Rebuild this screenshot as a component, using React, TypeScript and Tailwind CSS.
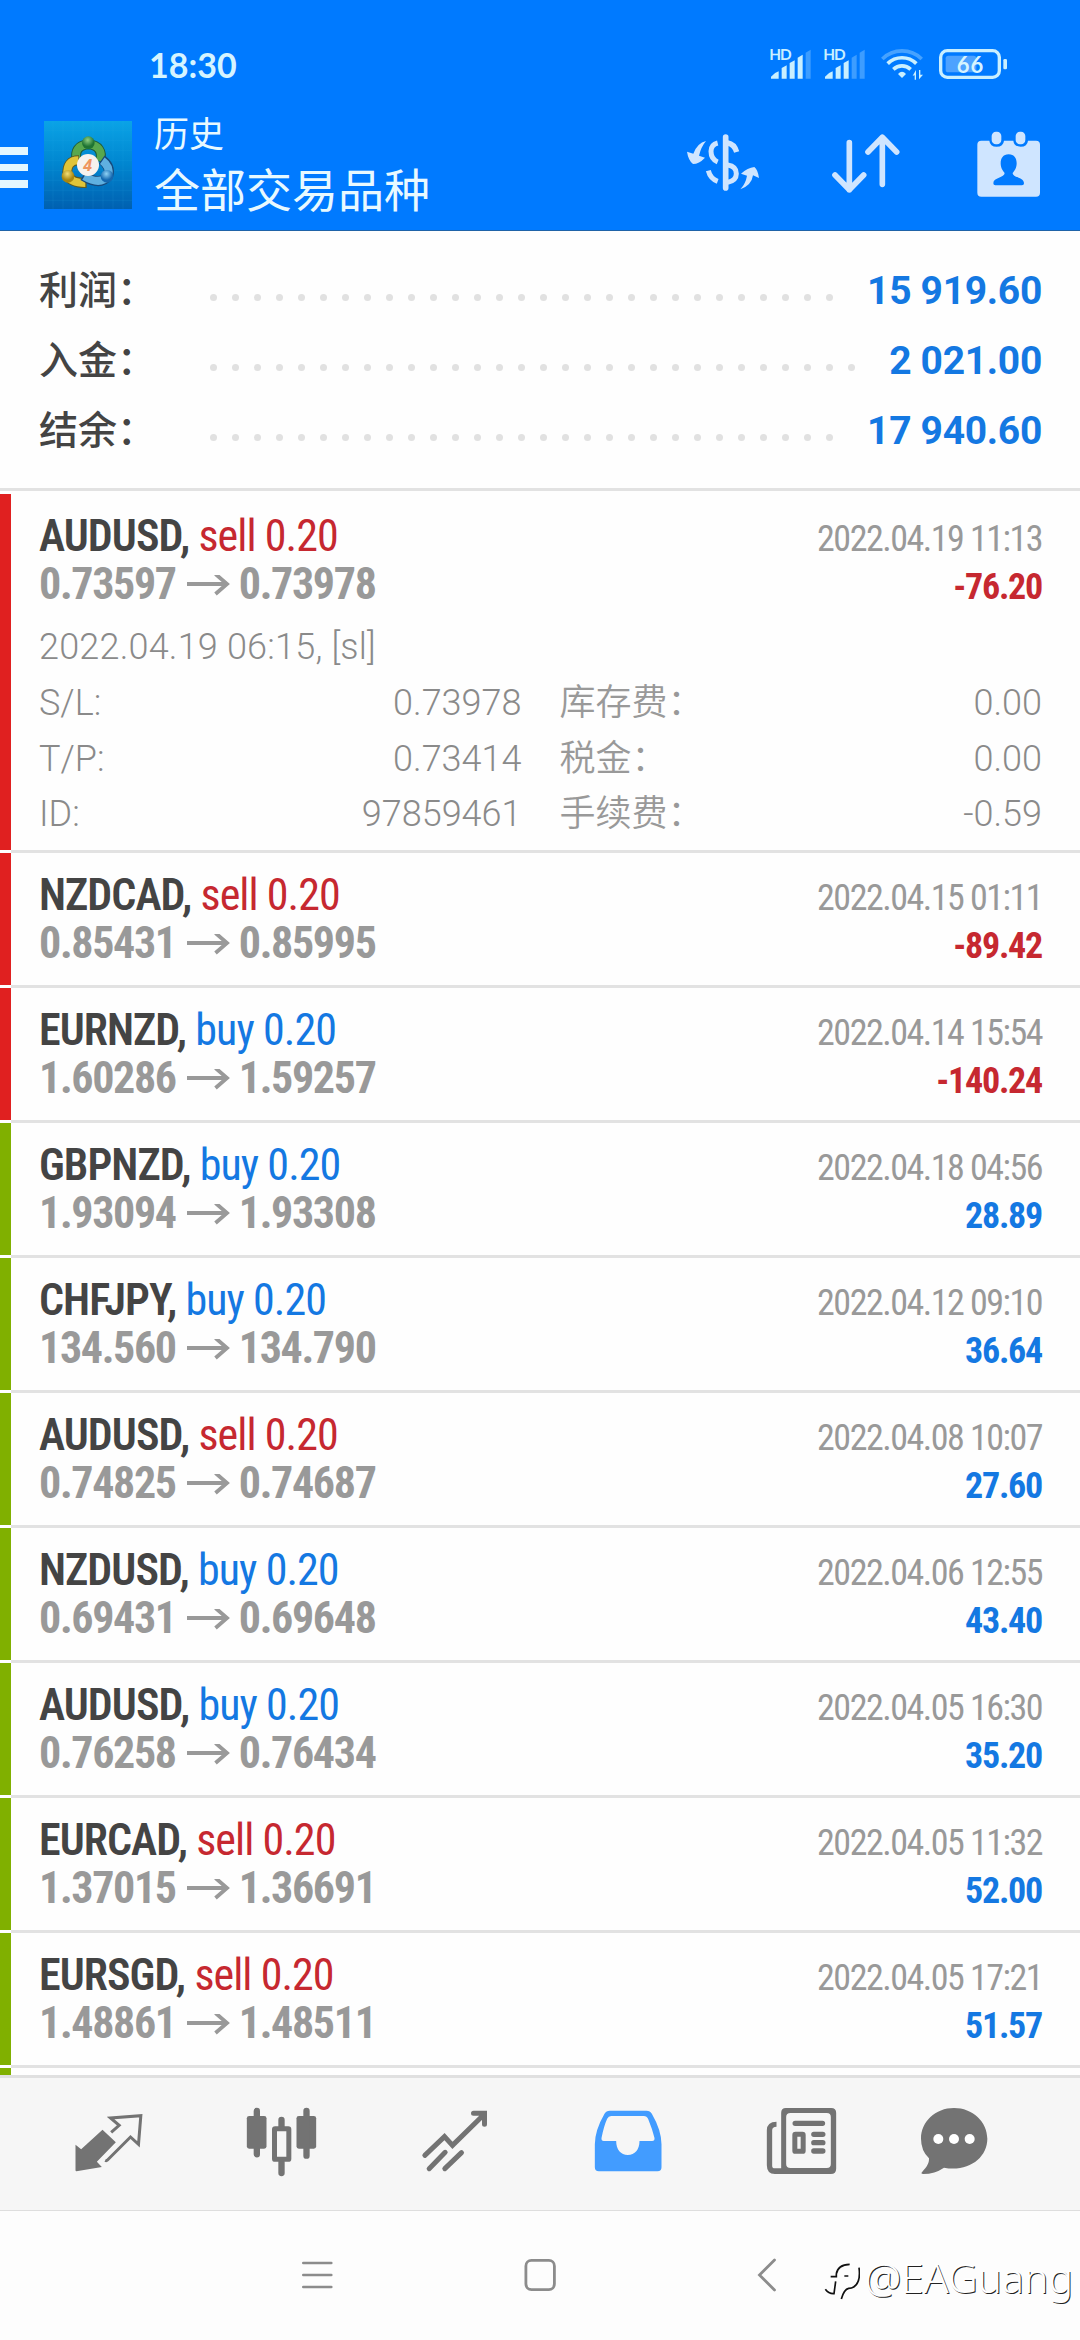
import type { ReactNode } from "react"

type Deal = {
    symbol: string
    side: "buy" | "sell"
    volume: string
    open: string
    close: string
    time: string
    profit: string
    details?: {
        comment: string
        rows: string[][]
    }
}

const summary = [
    { label: "利润：", value: "15 919.60" },
    { label: "入金：", value: "2 021.00" },
    { label: "结余：", value: "17 940.60" },
]

const deals: Deal[] = [
    {
        symbol: "AUDUSD",
        side: "sell",
        volume: "0.20",
        open: "0.73597",
        close: "0.73978",
        time: "2022.04.19 11:13",
        profit: "-76.20",
        details: {
            comment: "2022.04.19 06:15, [sl]",
            rows: [
                ["S/L:", "0.73978", "库存费：", "0.00"],
                ["T/P:", "0.73414", "税金：", "0.00"],
                ["ID:", "97859461", "手续费：", "-0.59"],
            ],
        },
    },
    { symbol: "NZDCAD", side: "sell", volume: "0.20", open: "0.85431", close: "0.85995", time: "2022.04.15 01:11", profit: "-89.42" },
    { symbol: "EURNZD", side: "buy", volume: "0.20", open: "1.60286", close: "1.59257", time: "2022.04.14 15:54", profit: "-140.24" },
    { symbol: "GBPNZD", side: "buy", volume: "0.20", open: "1.93094", close: "1.93308", time: "2022.04.18 04:56", profit: "28.89" },
    { symbol: "CHFJPY", side: "buy", volume: "0.20", open: "134.560", close: "134.790", time: "2022.04.12 09:10", profit: "36.64" },
    { symbol: "AUDUSD", side: "sell", volume: "0.20", open: "0.74825", close: "0.74687", time: "2022.04.08 10:07", profit: "27.60" },
    { symbol: "NZDUSD", side: "buy", volume: "0.20", open: "0.69431", close: "0.69648", time: "2022.04.06 12:55", profit: "43.40" },
    { symbol: "AUDUSD", side: "buy", volume: "0.20", open: "0.76258", close: "0.76434", time: "2022.04.05 16:30", profit: "35.20" },
    { symbol: "EURCAD", side: "sell", volume: "0.20", open: "1.37015", close: "1.36691", time: "2022.04.05 11:32", profit: "52.00" },
    { symbol: "EURSGD", side: "sell", volume: "0.20", open: "1.48861", close: "1.48511", time: "2022.04.05 17:21", profit: "51.57" },
]

function Signal({ level }: { level: number }) {
    const bars = [
        "M331 143v-6q8-11 23-16v22z",
        "M363 143v-32l15-8v40z",
        "M387 143v-47l15-8v55z",
        "M411 143v-63l15-9v72z",
        "M435 143v-78l15-9v87z",
    ]
    return (
        <svg className="-mt-[9px] h-[42px] w-[44px]" viewBox="322 21 132 126">
            <text x="326" y="87" fontSize="46" fontWeight="700" fill="#c9efff" fontFamily="Lato, sans-serif" textLength="67">
                HD
            </text>
            {bars.map((d, i) => (
                <path key={d} d={d} fill="#c9efff" opacity={i < level ? 1 : 0.3} />
            ))}
        </svg>
    )
}

function Wifi() {
    return (
        <svg className="ml-[14px] h-[35px] w-[45px]" viewBox="657 54 135 105" fill="none" stroke="#c9efff" strokeWidth="11">
            <path d="M664 93a84 84 0 0 1 118 0" opacity="0.35" />
            <path d="M680 107a61 61 0 0 1 86 0" />
            <path d="M697 124a38 38 0 0 1 52 0" />
            <path d="M711 138q12-13 24 0l-12 12z" fill="#c9efff" stroke="none" />
            <path d="M755 143l10-17v29h-4v-13zM774 126h4v14h8l-12 14z" fill="#c9efff" stroke="none" />
        </svg>
    )
}

function Battery() {
    return (
        <svg className="ml-[13px] h-[32px] w-[70px]" viewBox="831 54 210 96">
            <rect x="854" y="77" width="92" height="50" rx="8" fill="#fff" opacity="0.3" />
            <rect x="839" y="62" width="176" height="80" rx="20" fill="none" stroke="#c9efff" strokeWidth="10" />
            <rect x="1027" y="87" width="11" height="31" rx="4" fill="#c9efff" />
            <text x="887" y="128" fontSize="66" fontWeight="700" fill="#d6f4ff" fontFamily="Lato, sans-serif" textLength="80">
                66
            </text>
        </svg>
    )
}

function AppLogo() {
    return (
        <svg className="h-[88px] w-[88px]" viewBox="133 272 264 264">
            <defs>
                <linearGradient id="sky" x1="0" y1="0" x2="0" y2="1">
                    <stop offset="0" stopColor="#0aa3e6" />
                    <stop offset="0.5" stopColor="#0085cf" />
                    <stop offset="1" stopColor="#0060b0" />
                </linearGradient>
                <radialGradient id="green" cx="0.45" cy="0.3">
                    <stop offset="0" stopColor="#8fcf83" />
                    <stop offset="1" stopColor="#1f7433" />
                </radialGradient>
                <radialGradient id="gold" cx="0.45" cy="0.3">
                    <stop offset="0" stopColor="#f1df78" />
                    <stop offset="1" stopColor="#a8860f" />
                </radialGradient>
                <radialGradient id="azure" cx="0.45" cy="0.3">
                    <stop offset="0" stopColor="#8fd2f5" />
                    <stop offset="1" stopColor="#1468b0" />
                </radialGradient>
            </defs>
            <rect x="133" y="272" width="264" height="264" fill="url(#sky)" />
            <path
                d="M160 272v264M190 272v264M220 272v264M250 272v264M280 272v264M310 272v264M340 272v264M370 272v264M133 300h264M133 330h264M133 360h264M133 390h264M133 420h264M133 450h264M133 480h264M133 510h264"
                stroke="#36b5ef"
                strokeOpacity="0.22"
                strokeWidth="1.5"
            />
            <g fill="none">
                <path d="M231 392q-10-46 35-50q46 4 36 52" stroke="#1f5c3a" strokeWidth="30" />
                <path d="M231 390q-10-44 35-48q46 4 36 50" stroke="#58a84e" strokeWidth="24" />
                <path d="M238 390q-38 0-35 44q10 24 58 24" stroke="#5f5a20" strokeWidth="30" />
                <path d="M236 390q-36 0-33 44q10 24 54 24" stroke="#e0c438" strokeWidth="24" />
                <path d="M306 388q28 20 20 48q-24 32-76 0" stroke="#174a7c" strokeWidth="30" />
                <path d="M308 391q24 17 18 45q-24 30-72 2" stroke="#5fb0e0" strokeWidth="24" />
            </g>
            <circle cx="266" cy="337" r="19" fill="url(#green)" />
            <circle cx="205" cy="438" r="19" fill="url(#gold)" />
            <circle cx="322" cy="438" r="19" fill="url(#azure)" />
            <circle cx="265" cy="404" r="33" fill="#f6f2ee" />
            <text x="264" y="421" textAnchor="middle" fontSize="48" fontWeight="700" fontStyle="italic" fill="#ee9560" fontFamily="Open Sans, sans-serif">
                4
            </text>
        </svg>
    )
}

function StatusBar() {
    return (
        <div className="flex h-[86px] items-end justify-between pr-[72px] pl-[149px]">
            <span className="font-[Lato] text-[34px] leading-[42px] font-bold text-[#d6f4ff]">18:30</span>
            <div className="mb-[5px] flex h-[35px] items-center">
                <Signal level={4} />
                <span className="w-[10px]" />
                <Signal level={3} />
                <Wifi />
                <Battery />
            </div>
        </div>
    )
}

function Header() {
    return (
        <header className="h-[231px] border-b border-[#1f63a8] bg-[#007aff]">
            <StatusBar />
            <div className="flex h-[144px]">
                <div className="mt-[61px] flex w-[28px] flex-col gap-[9px]">
                    <span className="h-[7.5px] bg-[#e3f7ff]" />
                    <span className="h-[7.5px] bg-[#e3f7ff]" />
                    <span className="h-[7.5px] bg-[#e3f7ff]" />
                </div>
                <div className="mt-[35px] ml-[16px]">
                    <AppLogo />
                </div>
                <div className="mt-[28px] ml-[22px] flex flex-1 flex-col text-[#e8f9ff]">
                    <span className="text-[35px] leading-[44px]">历史</span>
                    <span className="text-[46px] leading-[66px]">全部交易品种</span>
                </div>
                <div className="mt-[45px] mr-[38px] flex text-[#cfe5ff]">
                    {/* currency */}
                    <svg className="h-[66px] w-[76px]" viewBox="72 306 228 198" fill="none" stroke="currentColor" strokeWidth="14">
                        <path d="M194 324v153" strokeWidth="17" strokeLinecap="round" />
                        <path d="M170 342q-20 5-20 25q0 24 20 32" strokeWidth="15" />
                        <path d="M142 425q6 24 28 32" strokeWidth="15" />
                        <path d="M200 342q20 3 27 27" strokeWidth="16" />
                        <path d="M200 408q26 4 26 26q0 20-26 26" strokeWidth="15" />
                        <path d="M135 336q-26 6-38 38l-19-6q4 26 18 37q18 0 36-19l-18-6q6-26 21-44z" fill="currentColor" stroke="none" />
                        <path d="M238 481q34-12 38-42l18 8q-3-24-14-33q-20 2-40 20l18 6q-4 24-20 41z" fill="currentColor" stroke="none" />
                    </svg>
                    {/* sort */}
                    <svg className="ml-[70px] h-[66px] w-[70px]" viewBox="511 306 210 198" fill="none" stroke="currentColor" strokeWidth="17" strokeLinecap="round" strokeLinejoin="round">
                        <path d="M566 341v141M523 438l43 44l43-44M665 466v-141M622 369l43-44l43 44" />
                    </svg>
                    {/* period */}
                    <svg className="ml-[75px] h-[66px] w-[66px]" viewBox="946 303 198 198" fill="currentColor">
                        <path
                            fillRule="evenodd"
                            d="M962 332h24q2 18 22 18t22-18h28q2 18 22 18t22-18h24q12 0 12 12v144q0 12-12 12h-164q-12 0-12-12v-144q0-12 12-12zM1044 373c-17 0-24 13-24 27c0 15 7 23 12 29c0 14-34 13-34 31q0 6 6 6h80q6 0 6-6c0-18-34-17-34-31c5-6 12-14 12-29c0-14-7-27-24-27z"
                        />
                        <rect x="993" y="305" width="29" height="38" rx="13" />
                        <rect x="1065" y="305" width="29" height="38" rx="13" />
                    </svg>
                </div>
            </div>
        </header>
    )
}

function Summary() {
    return (
        <section className="h-[260px] border-b-3 border-[#e2e2e2] pt-[25px]">
            {summary.map((item) => (
                <div key={item.label} className="flex h-[70px] items-center pr-[38px] pl-[39px] text-[39px] leading-[70px] font-medium">
                    <span className="w-[171px] text-[#444444]">{item.label}</span>
                    <span className="mt-[12px] flex h-[7px] flex-1 flex-wrap gap-x-[15px] gap-y-4 overflow-hidden">
                        {Array.from({ length: 36 }, (_, i) => (
                            <i key={i} className="size-[7px] rounded-full bg-[#e1e1e1]" />
                        ))}
                    </span>
                    <span className="pl-[16px] font-bold tracking-[-0.3px] text-[#1478e2]">{item.value}</span>
                </div>
            ))}
        </section>
    )
}

function DealRow({ deal }: { deal: Deal }) {
    const loss = deal.profit.startsWith("-")
    return (
        <li className="flex">
            <span className={loss ? "mb-[3px] w-[11px] bg-[#e02020]" : "mb-[3px] w-[11px] bg-[#80b000]"} />
            <div className="flex-1 border-b-3 border-[#e2e2e2] pt-[18px] pr-[38px] pl-[28px]">
                <div className="flex h-[48px] items-baseline justify-between font-['Roboto_Condensed'] leading-[48px]">
                    <span className="text-[44px] tracking-[-0.95px]">
                        <b className="font-semibold text-[#444444]">{deal.symbol}, </b>
                        <span className={deal.side === "sell" ? "text-[#c62830]" : "text-[#1478e2]"}>
                            {deal.side} {deal.volume}
                        </span>
                    </span>
                    <span className="text-[36px] tracking-[-1.5px] text-[#999999]">{deal.time}</span>
                </div>
                <div className="flex h-[48px] items-baseline justify-between font-['Roboto_Condensed'] leading-[48px] font-bold">
                    <span className="flex items-baseline text-[44px] tracking-[-1.35px] text-[#999999]">
                        {deal.open}
                        <svg className="mr-[9px] ml-[11px] h-[24px] w-[43px]" viewBox="0 0 43 24" fill="none" stroke="currentColor" strokeWidth="3.800">
                            <path d="M0 9h40M28.500-1l11.500 10l-11.500 10" />
                        </svg>
                        {deal.close}
                    </span>
                    <span className={loss ? "text-[36px] tracking-[-1.25px] text-[#c62830]" : "text-[36px] tracking-[-1.25px] text-[#1478e2]"}>{deal.profit}</span>
                </div>
                {deal.details ? (
                    <div className="mt-[10px] h-[232px] text-[36px] font-[350] text-[#8a8a8a]">
                        <p className="h-[57px] leading-[58px] tracking-[0.2px]">{deal.details.comment}</p>
                        {deal.details.rows.map(([a, b, c, d]) => (
                            <div key={a} className="grid h-[55.5px] grid-cols-2 gap-x-[38px] leading-[56px]">
                                <div className="flex justify-between">
                                    <span>{a}</span>
                                    <span>{b}</span>
                                </div>
                                <div className="flex justify-between">
                                    <span className="text-[#999999]">{c}</span>
                                    <span>{d}</span>
                                </div>
                            </div>
                        ))}
                    </div>
                ) : (
                    <div className="h-[18px]" />
                )}
            </div>
        </li>
    )
}

function TabItem({ viewBox, className, children }: { viewBox: string; className: string; children: ReactNode }) {
    return (
        <div className={className}>
            <svg className="h-[78px] w-[78px]" viewBox={viewBox} fill="currentColor">
                {children}
            </svg>
        </div>
    )
}

function TabBar() {
    return (
        <nav className="flex h-[136px] border-t-3 border-b border-t-[#e0e0e0] border-b-[#dedede] bg-[#f6f6f6] pl-[22px] text-[#737373]">
            <TabItem viewBox="28.5 135 234 234" className="flex w-[173px] items-center justify-center">
                <path d="M126 209l40 38l-57 58l15 16l-76 13q-3 0-3-3v-77l17 14z" />
                <path d="M152 217l24-21l-26-22l91-7l-7 86l-24-22l-69 69q-3 3-7 1" fill="none" stroke="currentColor" strokeWidth="9" />
            </TabItem>
            <TabItem viewBox="547.5 135 234 234" className="flex w-[173px] items-center justify-center">
                <rect x="559" y="168" width="59" height="98" rx="7" />
                <rect x="708" y="168" width="59" height="98" rx="7" />
                <path d="M589 153v130M738 153v134M663 180v20M663 306v33" stroke="currentColor" strokeWidth="19" strokeLinecap="round" />
                <rect x="642" y="206" width="43" height="92" rx="2" fill="none" stroke="currentColor" strokeWidth="15" />
            </TabItem>
            <TabItem viewBox="1066.5 135 234 234" className="flex w-[173px] items-center justify-center">
                <path
                    d="M1093 286l59-56l24 26l96-94M1239 160h33v33M1106 326l48-49M1153 326l50-48"
                    fill="none"
                    stroke="currentColor"
                    strokeWidth="15"
                    strokeLinecap="round"
                />
            </TabItem>
            <TabItem viewBox="25.5 135 234 234" className="flex w-[173px] items-center justify-center text-[#429cff]">
                <path
                    fillRule="evenodd"
                    d="M88 152h110q11 0 16 9q29 50 29 92v69q0 12-12 12h-176q-12 0-12-12v-69q0-42 29-92q5-9 16-9zM92 168q-8 0-12 8q-10 22-17 58q-1 9 7 9h37c0 26 14 42 35 42s35-16 35-42h38q8 0 7-9q-7-28-19-57q-4-9-13-9z"
                />
            </TabItem>
            <TabItem viewBox="544.5 135 234 234" className="flex w-[173px] items-center justify-center">
                <path
                    fillRule="evenodd"
                    d="M616 144h136q15 0 15 15v167q0 16-16 16h-168q-24 0-24-26v-105q0-26 29-26v15q-13 0-13 11v106q0 8 8 8h19v-166q0-15 14-15zM630 159q-13 0-13 12v141q0 12 13 12h109q12 0 12-12v-141q0-12-12-12z"
                />
                <path d="M644 190h82M700 223h27M700 248h27M700 273h27" stroke="currentColor" strokeWidth="16" strokeLinecap="round" />
                <rect x="643" y="223" width="25" height="51" rx="2" fill="none" stroke="currentColor" strokeWidth="15" />
            </TabItem>
            <TabItem viewBox="1002 135 234 234" className="flex w-[133px] items-center justify-center">
                <path d="M1119 144c56 0 100 41 100 92c0 58-58 101-130 87q-28 19-62 19q-10-1-3-7c12-12 21-25 20-40q-24-23-24-59c0-51 43-92 99-92z" />
                <circle cx="1072" cy="237" r="15" fill="#fff" />
                <circle cx="1119" cy="237" r="15" fill="#fff" />
                <circle cx="1166" cy="237" r="15" fill="#fff" />
            </TabItem>
        </nav>
    )
}

function SystemNav() {
    return (
        <div className="relative flex h-[129px] items-center bg-[#fdfdfd] pb-px text-[#8c8c8c]">
            <svg className="ml-[301px] h-[34px] w-[32px]" viewBox="0 0 32 34" stroke="currentColor" strokeWidth="2.6" strokeLinecap="round">
                <path d="M2.300 5h28M2.300 17h28M2.300 29h28" />
            </svg>
            <svg className="ml-[190px] h-[34px] w-[34px]" viewBox="0 0 34 34" fill="none" stroke="currentColor" strokeWidth="2.800">
                <rect x="2.900" y="2.400" width="28.500" height="29.200" rx="5.500" />
            </svg>
            <svg className="ml-[199px] h-[34px] w-[22px]" viewBox="0 0 22 34" fill="none" stroke="currentColor" strokeWidth="2.800" strokeLinecap="round">
                <path d="M18.500 2l-15 15l15 15" />
            </svg>
            <div className="absolute top-[42px] right-[7px] flex items-center gap-[5px]">
                <svg className="mt-[6px] h-[42px] w-[36px]" viewBox="736 608 108 126" fill="none" stroke="#111" strokeWidth="5">
                    <path d="M756 661h17v-8q4-28 40-29M797 659h12M740 699q10 14 26 13l5-37M841 634q6 44-16 58q-6 4-15 4q-14 3-22 32" />
                </svg>
                <span className="font-['Noto_Sans'] text-[41px] leading-[48px] font-light text-white [text-shadow:1px_1px_0_#222]">@EAGuang</span>
            </div>
        </div>
    )
}

export default function App() {
    return (
        <div className="flex h-[2340px] w-[1080px] flex-col overflow-hidden bg-[#fefefe] font-['Roboto','Noto_Sans_CJK_SC',sans-serif]">
            <Header />
            <Summary />
            <ul className="mt-[3px] h-[1581px] overflow-hidden">
                {deals.map((deal) => (
                    <DealRow key={deal.time} deal={deal} />
                ))}
                <li className="h-[10px] w-[11px] bg-[#80b000]" />
            </ul>
            <TabBar />
            <SystemNav />
        </div>
    )
}
